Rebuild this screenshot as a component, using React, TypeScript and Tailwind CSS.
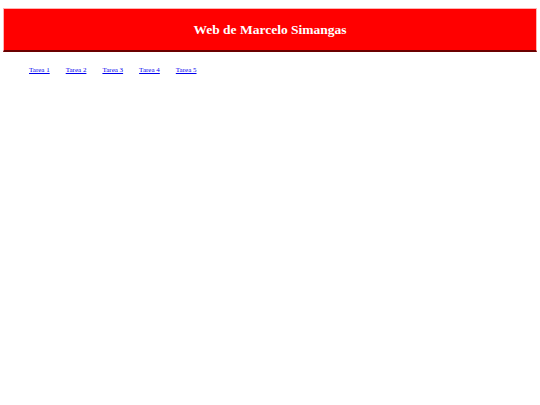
export default function App() {
	const tareas = ["Tarea 1", "Tarea 2", "Tarea 3", "Tarea 4", "Tarea 5"];
	return (
		<div className="min-h-[405px] bg-white pt-2 font-['Liberation_Serif',serif]">
			<header className="mx-[3px] flex h-[44px] items-center justify-center border border-b-2 border-[#ffb3b3] border-b-[#6b0000] bg-[#ff0000]">
				<h1 className="pt-px text-[13.5px] font-bold text-white">Web de Marcelo Simangas</h1>
			</header>
			<nav className="flex gap-[16px] pl-[29px] pt-[13px]">
				{tareas.map((t) => (
					<a className="text-[7px] text-[#0000ee] underline" href="#" key={t}>
						{t}
					</a>
				))}
			</nav>
		</div>
	);
}
